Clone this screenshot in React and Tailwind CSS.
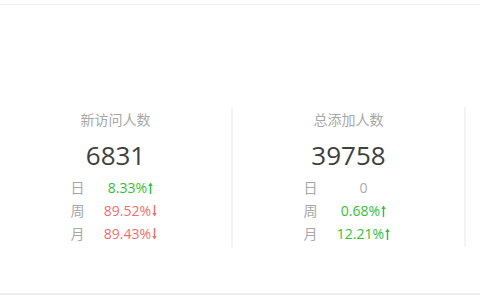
function Arrow({ up }) {
  return (
    <svg width="5" height="12" viewBox="0 0 5 12" className="inline-block ml-[1px]" style={{ verticalAlign: "-1px" }}>
      {up ? (
        <path d="M2.5 0.5 L0.3 4 H1.8 V12 H3.2 V4 H4.7 Z" fill="currentColor" />
      ) : (
        <path d="M2.5 11.5 L0.3 8 H1.8 V0 H3.2 V8 H4.7 Z" fill="currentColor" />
      )}
    </svg>
  );
}

export default function App() {
  const font = { fontFamily: '"Open Sans", "Noto Sans CJK SC", sans-serif' };
  const cols = [
    {
      title: "新访问人数",
      value: "6831",
      rows: [
        { l: "日", v: "8.33%", a: "up", c: "text-[#35c035]" },
        { l: "周", v: "89.52%", a: "down", c: "text-[#ef6f6f]" },
        { l: "月", v: "89.43%", a: "down", c: "text-[#ef6f6f]" },
      ],
    },
    {
      title: "总添加人数",
      value: "39758",
      rows: [
        { l: "日", v: "0", a: null, c: "text-[#aaaaaa]" },
        { l: "周", v: "0.68%", a: "up", c: "text-[#35c035]" },
        { l: "月", v: "12.21%", a: "up", c: "text-[#35c035]" },
      ],
    },
  ];
  return (
    <div className="w-[480px] h-[300px] bg-white overflow-hidden" style={font}>
      <div className="mt-[4px] h-[291px] border-t border-[#f1f1f1] border-b-2 border-b-[#ececec] flex flex-col">
        <div className="flex mt-[102px]">
          {cols.map((col, i) => (
            <div
              key={i}
              className="w-[233px] h-[140px] border-r-2 border-[#f3f3f3] flex flex-col items-center pt-[3px]"
            >
              <div className="text-[14px] leading-[20px] text-[#a8a8a8]">{col.title}</div>
              <div className="mt-[7px] text-[26px] leading-[36px] text-[#404040]">{col.value}</div>
              <div className="mt-[3px] flex flex-col">
                {col.rows.map((r, j) => (
                  <div key={j} className="flex h-[23px] items-center text-[14px]">
                    <span className="w-[30px] text-center text-[#a8a8a8]">{r.l}</span>
                    <span className={`w-[76px] text-center ${r.c}`}>
                      {r.v}
                      {r.a && <Arrow up={r.a === "up"} />}
                    </span>
                  </div>
                ))}
              </div>
            </div>
          ))}
        </div>
      </div>
    </div>
  );
}
